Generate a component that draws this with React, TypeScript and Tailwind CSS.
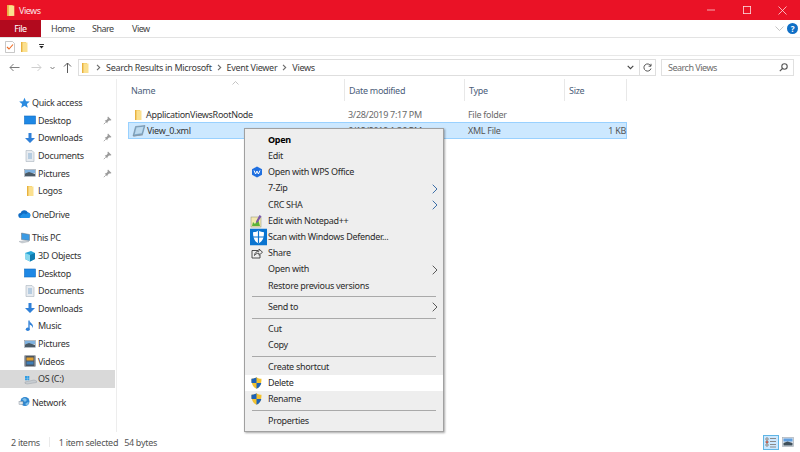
import React from "react";

const Folder = ({ s = 12 }: { s?: number }) => (
  <svg width={s} height={s} viewBox="0 0 12 12" className="shrink-0">
    <path d="M3 1h5v10H3z" fill="#f5c95f" />
    <path d="M4 1.500h5.500V11H4z" fill="#fbe08f" />
    <path d="M3 1h1.400v10H3z" fill="#e8b23f" />
  </svg>
);
const Monitor = () => (
  <svg width="12" height="12" viewBox="0 0 12 12" className="shrink-0">
    <rect x="0.5" y="2" width="11" height="8" fill="#1e88e5" />
    <rect x="0.5" y="2" width="11" height="8" fill="none" stroke="#0f6cc0" strokeWidth=".6" />
  </svg>
);
const Down = () => (
  <svg width="12" height="12" viewBox="0 0 12 12" className="shrink-0">
    <path d="M4.500 1h3v5H11L6 11 1 6h3.500z" fill="#2f80d8" />
  </svg>
);
const Doc = () => (
  <svg width="12" height="12" viewBox="0 0 12 12" className="shrink-0">
    <path d="M2 .5h6l2 2v9H2z" fill="#e7ebf0" stroke="#a9b3bd" strokeWidth=".6" />
    <path d="M4 4h4M4 6h4M4 8h4" stroke="#6f9fc9" strokeWidth=".8" />
  </svg>
);
const Pic = () => (
  <svg width="12" height="12" viewBox="0 0 12 12" className="shrink-0">
    <rect x="0.5" y="2.500" width="11" height="7" fill="#dfe6ec" stroke="#8f9aa5" strokeWidth=".6" />
    <path d="M1 3h10v3H1z" fill="#7fb2e0" />
    <path d="M1 6.500l4-1.500 6 2v2H1z" fill="#4a5a66" />
  </svg>
);
const Pin = () => (
  <svg width="9" height="9" viewBox="0 0 9 9" className="shrink-0">
    <path d="M5 .5l3.500 3.500-1 .5-1.500 0-1.500 1.500-.3 1.500L1.700 4.500l1.500-.3L4.700 2.700l-.2-1.200z" fill="#9a9a9a" />
    <path d="M2.800 6.200L.8 8.200" stroke="#9a9a9a" strokeWidth=".8" />
  </svg>
);
const Star = () => (
  <svg width="12" height="12" viewBox="0 0 12 12" className="shrink-0">
    <path d="M6.500.8l1.500 3.500 3.800.3-2.900 2.500.9 3.700-3.300-2-3.300 2 .9-3.700L1.200 4.600 5 4.300z" fill="#2a8be0" />
  </svg>
);
const Cloud = () => (
  <svg width="13" height="12" viewBox="0 0 13 12" className="shrink-0">
    <path d="M3 10a2.500 2.500 0 0 1-.4-5A3.800 3.800 0 0 1 9.700 4.300 2.900 2.900 0 0 1 10 10z" fill="#0f6cc4" />
    <path d="M3 10a1.800 1.800 0 0 1 .8-3.300A2.500 2.500 0 0 1 8 6.500a1.900 1.900 0 0 1 4.300 1.700A2 2 0 0 1 10 10z" fill="#1e8fe6" />
  </svg>
);
const PC = () => (
  <svg width="13" height="12" viewBox="0 0 13 12" className="shrink-0">
    <path d="M3.500 1l8 1.500v6l-8-1z" fill="#3c9be4" stroke="#69707a" strokeWidth=".5" />
    <path d="M1 9.500l7-1 3 1-7 1.500z" fill="#cfd5da" stroke="#9aa2aa" strokeWidth=".4" />
  </svg>
);
const Cube = () => (
  <svg width="12" height="12" viewBox="0 0 12 12" className="shrink-0">
    <path d="M1 3l6-2 4 2v6l-5 2.500L1 9z" fill="#27a6d8" />
    <path d="M1 3l5 2v6.500L1 9z" fill="#8ad8ee" />
    <path d="M6 5l5-2v6l-5 2.500z" fill="#0f7cb0" />
  </svg>
);
const Music = () => (
  <svg width="12" height="12" viewBox="0 0 12 12" className="shrink-0">
    <path d="M5 .5v8.200" stroke="#2f80d8" strokeWidth="1.300" />
    <ellipse cx="3.800" cy="9.300" rx="2" ry="1.800" fill="#2f80d8" />
    <path d="M5.300 1c1 2 3.700 2.500 3.700 5.500 0 .7-.2 1.200-.4 1.500.2-2-1.800-3-3.300-3.500z" fill="#2f80d8" />
  </svg>
);
const Video = () => (
  <svg width="12" height="12" viewBox="0 0 12 12" className="shrink-0">
    <rect x=".5" y=".5" width="11" height="11" fill="#4c5560" />
    <rect x="2.500" y="2.500" width="7" height="3" fill="#e0a030" />
    <rect x="2.500" y="6.500" width="7" height="3" fill="#3f7fb8" />
    <path d="M1.300 1.500v9M10.700 1.500v9" stroke="#c9ced3" strokeWidth=".9" strokeDasharray="1 1" />
  </svg>
);
const Drive = () => (
  <svg width="13" height="12" viewBox="0 0 13 12" className="shrink-0">
    <path d="M1 9l9-2 2.500 1v1.500L3 11 1 10.300z" fill="#c7ccd1" stroke="#8d959c" strokeWidth=".4" />
    <path d="M1 3h2v2H1zM3.300 3h2v2h-2zM1 5.300h2v2H1zM3.300 5.300h2v2h-2z" fill="#2f9de4" />
  </svg>
);
const Net = () => (
  <svg width="13" height="12" viewBox="0 0 13 12" className="shrink-0">
    <circle cx="7" cy="5.500" r="4.500" fill="#2f86cf" />
    <path d="M4 3l3-1 2 2-2 2zM7 8l3-2 1 1-2 2.500z" fill="#7fc0ea" />
    <rect x="1" y="5.500" width="4" height="3" fill="#dfe4e8" stroke="#7a8794" strokeWidth=".4" />
  </svg>
);
const Shield = () => (
  <svg width="13" height="13" viewBox="0 0 13 13" className="shrink-0">
    <path d="M6.500.8c1.500 1 3.300 1.500 5 1.500 0 4.500-1 8-5 10-4-2-5-5.500-5-10 1.700 0 3.500-.5 5-1.500z" fill="#f2c230" />
    <path d="M6.500.8v5.700h-5c-.1-1.300-.1-2.700 0-4.200 1.700 0 3.500-.5 5-1.500z" fill="#1d62b8" />
    <path d="M6.500 6.500v5.800c2.800-1.400 4.300-3.400 4.800-5.800z" fill="#1d62b8" />
  </svg>
);
const Wps = () => (
  <svg width="12" height="12" viewBox="0 0 12 12" className="shrink-0">
    <path d="M6 .5l5 2.800v5.400L6 11.500 1 8.700V3.300z" fill="#1f6fe0" />
    <path d="M3 4.500l1.600 3.500L6 5l1.400 3L9 4.500" fill="none" stroke="#fff" strokeWidth="1" />
  </svg>
);
const Npp = () => (
  <svg width="14" height="14" viewBox="0 0 14 14" className="shrink-0">
    <rect x="1" y="3" width="10" height="10" fill="#f4e9b0" stroke="#8a8f70" strokeWidth=".5" />
    <path d="M2 12l1-4 2 2 3-5 2 7z" fill="#5cb338" />
    <path d="M9.500 1l2 1.200L8 8l-2 1 .2-2z" fill="#7b5aa8" />
  </svg>
);
const Defender = () => (
  <svg width="17" height="17" viewBox="0 0 17 17" className="shrink-0 ml-[3px]">
    <rect width="17" height="17" fill="#0a74d0" />
    <path d="M8.500 2c1.700 1.200 3.500 1.700 5.500 1.700 0 5-1 9-5.500 11.300C4 12.700 3 8.700 3 3.700 5 3.700 6.800 3.200 8.500 2z" fill="#fff" />
    <path d="M8.500 2v13M3 8.500h11" stroke="#0a74d0" strokeWidth="1.200" />
  </svg>
);
const Share = () => (
  <svg width="12" height="12" viewBox="0 0 12 12" className="shrink-0" fill="none" stroke="#3a3a3a" strokeWidth=".9">
    <path d="M7 3.500H1v7.500h8V8" />
    <path d="M3.500 8.500c.2-2.700 2-4.300 4.500-4.300V2l3.500 3.200L8 8.300V6.200c-2 0-3.400.8-4.500 2.300z" fill="#eeeeee" />
  </svg>
);
const XmlIcon = () => (
  <svg width="14" height="12" viewBox="0 0 14 12" className="shrink-0">
    <path d="M3.500 1.500L13 .5l-2.500 9-9.500 1.500z" fill="#7fa9c9" stroke="#6b7a88" strokeWidth=".5" />
    <path d="M4.500 2.500l7-.8-1.800 6.500-7 1z" fill="#bcd9ee" />
    <path d="M1 11l9.500-1.500.5.700L2 11.500z" fill="#8794a0" />
  </svg>
);
const Chevron = ({ blue }: { blue?: boolean }) => (
  <svg width="6" height="10" viewBox="0 0 6 10" className="shrink-0" fill="none" stroke={blue ? "#3d6fa8" : "#5a5a5a"} strokeWidth="1">
    <path d="M.7.700L5 5 .7 9.300" />
  </svg>
);
const Crumb = () => (
  <svg width="5" height="7" viewBox="0 0 5 7" className="shrink-0 mx-[5px]" fill="none" stroke="#6a6a6a" strokeWidth="1.100">
    <path d="M1 .8L3.700 3.500 1 6.200" />
  </svg>
);

type Nav = { icon: React.ReactNode; label: string; pin?: boolean; top?: boolean; sel?: boolean };

const Group = ({ items }: { items: Nav[] }) => (
  <div className="flex flex-col">
    {items.map((n, i) => (
      <div
        key={i}
        className={`flex items-center h-[17.6px] ${n.top ? "pl-[18px]" : "pl-[24px]"} pr-[3px] ${n.sel ? "bg-[#d9d9d9] mr-px" : ""}`}
      >
        <span className="w-[14px] flex justify-start">{n.icon}</span>
        <span className="flex-1 text-[#333]">{n.label}</span>
        {n.pin && <span className="mr-[1px] flex"><Pin /></span>}
      </div>
    ))}
  </div>
);

type M = { t?: string; icon?: React.ReactNode; bold?: boolean; sub?: boolean; blue?: boolean; hover?: boolean; sep?: boolean };
const menu: M[] = [
  { t: "Open", bold: true },
  { t: "Edit" },
  { t: "Open with WPS Office", icon: <Wps /> },
  { t: "7-Zip", sub: true, blue: true },
  { t: "CRC SHA", sub: true, blue: true },
  { t: "Edit with Notepad++", icon: <Npp /> },
  { t: "Scan with Windows Defender...", icon: <Defender /> },
  { t: "Share", icon: <Share /> },
  { t: "Open with", sub: true },
  { t: "Restore previous versions" },
  { sep: true },
  { t: "Send to", sub: true },
  { sep: true },
  { t: "Cut" },
  { t: "Copy" },
  { sep: true },
  { t: "Create shortcut" },
  { t: "Delete", icon: <Shield />, hover: true },
  { t: "Rename", icon: <Shield /> },
  { sep: true },
  { t: "Properties" },
];

const Cols = "grid grid-cols-[216px_120px_100px_63px]";

export default function App() {
  return (
    <div className="relative w-[800px] h-[452px] overflow-hidden bg-white text-[9px] tracking-[-0.3px] leading-none text-[#333] font-['Noto_Sans','Open_Sans',sans-serif] flex flex-col">
      {/* Title bar */}
      <div className="h-[20px] bg-[#ea1226] flex items-center text-white pl-[4px]">
        <Folder s={13} />
        <span className="ml-[2px] text-[#fbe3e5] tracking-[-0.5px]">Views</span>
        <div className="ml-auto flex items-center">
          <svg width="8" height="2" viewBox="0 0 8 2" className="mr-[28px]"><path d="M0 1h8" stroke="#fff" strokeWidth=".8" opacity=".8" /></svg>
          <svg width="8" height="8" viewBox="0 0 8 8" className="mr-[27px]"><rect x=".4" y=".4" width="7.200" height="7.200" fill="none" stroke="#fff" strokeWidth=".8" opacity=".85" /></svg>
          <svg width="9" height="9" viewBox="0 0 9 9" className="mr-[13px]"><path d="M.5.500l8 8M8.500.500l-8 8" stroke="#fff" strokeWidth=".8" opacity=".85" /></svg>
        </div>
      </div>
      {/* Ribbon tabs */}
      <div className="h-[18px] flex items-stretch border-b border-[#e3e3e3] text-[#444] tracking-[-0.5px]">
        <div className="w-[41px] bg-[#b20a1e] text-white flex items-center justify-center">File</div>
        <div className="ml-[10px] w-[21px] flex items-center">Home</div>
        <div className="ml-[20px] w-[20px] flex items-center">Share</div>
        <div className="ml-[20px] flex items-center">View</div>
        <div className="ml-auto flex items-center pr-[2px]">
          <svg width="9" height="5" viewBox="0 0 9 5" className="mr-[3px]" fill="none" stroke="#b5b5b5" strokeWidth=".8"><path d="M.5.500L4.500 4.500 8.500.500" /></svg>
          <div className="w-[11px] h-[11px] rounded-full bg-[#0f6fc6] text-white font-bold text-[8px] flex items-center justify-center">?</div>
        </div>
      </div>
      {/* QAT */}
      <div className="h-[18px] border-b border-[#e8e8e8] flex items-center pl-[5px]">
        <svg width="10" height="12" viewBox="0 0 10 12">
          <path d="M.5.500h7l2 2v9h-9z" fill="#fff" stroke="#b0b0b0" strokeWidth=".7" />
          <path d="M2 6l2 2 4-4.500" fill="none" stroke="#ee6a22" strokeWidth="1.100" />
        </svg>
        <span className="ml-[3px] flex"><Folder s={12} /></span>
        <svg width="5" height="5" viewBox="0 0 5 5" className="ml-[9px]">
          <path d="M0 .5h5" stroke="#222" strokeWidth=".9" /><path d="M.3 2h4.400L2.500 4.500z" fill="#222" />
        </svg>
      </div>
      {/* Address row */}
      <div className="h-[23px] flex items-center">
        <div className="w-[78px] flex items-center pl-[9px] shrink-0">
          <svg width="11" height="9" viewBox="0 0 11 9" fill="none" stroke="#7a7a7a" strokeWidth="1"><path d="M10.500 4.500H1M4.500 1L1 4.500 4.500 8" /></svg>
          <svg width="11" height="9" viewBox="0 0 11 9" fill="none" stroke="#cfcfcf" strokeWidth="1" className="ml-[11px]"><path d="M.5 4.500H10M6.500 1L10 4.500 6.500 8" /></svg>
          <svg width="5" height="4" viewBox="0 0 5 4" fill="none" stroke="#7a7a7a" strokeWidth="1" className="ml-[8px]"><path d="M.5 1L2.500 3 4.500 1" /></svg>
          <svg width="9" height="11" viewBox="0 0 9 11" fill="none" stroke="#5a5a5a" strokeWidth="1" className="ml-[8px]"><path d="M4.500 11V1M1 4.500L4.500 1 8 4.500" /></svg>
        </div>
        <div className="w-[578px] h-[17px] border border-[#dedede] flex items-center text-[#3c3c3c]">
          <Folder s={12} />
          <Crumb />
          <span>Search Results in Microsoft</span>
          <Crumb />
          <span>Event Viewer</span>
          <Crumb />
          <span>Views</span>
          <svg width="7" height="5" viewBox="0 0 7 5" fill="none" stroke="#444" strokeWidth="1.100" className="ml-auto mr-[5px]"><path d="M.7.800L3.500 3.700 6.300.800" /></svg>
          <div className="w-px h-full bg-[#dedede]" />
          <svg width="9" height="9" viewBox="0 0 9 9" fill="none" stroke="#555" strokeWidth="1" className="mx-[3px]"><path d="M7.800 3A3.600 3.600 0 1 0 8 5.500M8 .8V3.200H5.600" /></svg>
        </div>
        <div className="ml-[5px] w-[133px] h-[17px] border border-[#e0e0e0] flex items-center pl-[6px] text-[#6d6d6d]">
          <span className="tracking-[-0.5px]">Search Views</span>
          <svg width="9" height="9" viewBox="0 0 9 9" fill="none" stroke="#555" strokeWidth="1.100" className="ml-auto mr-[5px]"><circle cx="5.500" cy="3.500" r="2.700" /><path d="M3.500 5.500L.8 8.200" /></svg>
        </div>
      </div>
      {/* Main */}
      <div className="flex-1 flex min-h-0">
        <aside className="w-[117px] shrink-0 border-r border-[#ededed] pt-[15px] flex flex-col gap-[6px]">
          <Group
            items={[
              { icon: <Star />, label: "Quick access", top: true },
              { icon: <Monitor />, label: "Desktop", pin: true },
              { icon: <Down />, label: "Downloads", pin: true },
              { icon: <Doc />, label: "Documents", pin: true },
              { icon: <Pic />, label: "Pictures", pin: true },
              { icon: <Folder />, label: "Logos" },
            ]}
          />
          <Group items={[{ icon: <Cloud />, label: "OneDrive", top: true }]} />
          <Group
            items={[
              { icon: <PC />, label: "This PC", top: true },
              { icon: <Cube />, label: "3D Objects" },
              { icon: <Monitor />, label: "Desktop" },
              { icon: <Doc />, label: "Documents" },
              { icon: <Down />, label: "Downloads" },
              { icon: <Music />, label: "Music" },
              { icon: <Pic />, label: "Pictures" },
              { icon: <Video />, label: "Videos" },
              { icon: <Drive />, label: "OS (C:)", sel: true },
            ]}
          />
          <Group items={[{ icon: <Net />, label: "Network", top: true }]} />
        </aside>
        <section className="flex-1 pl-[11px] min-w-0">
          <div className={`${Cols} h-[22px] items-center text-[#4c607a] w-[499px]`}>
            <div className="pl-[3px] relative h-full flex items-center">
              Name
              <svg width="7" height="4" viewBox="0 0 7 4" fill="none" stroke="#b5b5b5" strokeWidth=".8" className="absolute left-[104px] top-[2px]"><path d="M.5 3.500L3.500 .5l3 3" /></svg>
            </div>
            <div className="h-full flex items-center border-l border-[#e8e8e8] pl-[4px]">Date modified</div>
            <div className="h-full flex items-center border-l border-[#e8e8e8] pl-[4px]">Type</div>
            <div className="h-full flex items-center border-l border-r border-[#e8e8e8] pl-[4px]">Size</div>
          </div>
          <div className="mt-[6px] w-[499px]">
            <div className={`${Cols} h-[15px] items-center text-[#6a6a6a]`}>
              <div className="flex items-center pl-[4px] text-[#333]"><Folder /><span className="ml-[2px]">ApplicationViewsRootNode</span></div>
              <div className="pl-[4px]">3/28/2019 7:17 PM</div>
              <div className="pl-[4px]">File folder</div>
              <div />
            </div>
            <div className={`${Cols} h-[17px] items-center bg-[#cce8ff] border border-[#99d1ff] text-[#555]`}>
              <div className="flex items-center pl-[3px] text-[#333]"><XmlIcon /><span className="ml-[1px]">View_0.xml</span></div>
              <div className="pl-[3px]">6/12/2019 1:36 PM</div>
              <div className="pl-[3px]">XML File</div>
              <div className="text-right pr-[2px]">1 KB</div>
            </div>
          </div>
        </section>
      </div>
      {/* Status bar */}
      <div className="h-[20px] flex items-center pl-[11px] text-[#555]">
        <span>2 items</span>
        <span className="ml-[9px] mr-[9px] w-px h-[10px] bg-[#eaeaea]" />
        <span>1 item selected</span>
        <span className="ml-[6px]">54 bytes</span>
        <div className="ml-auto flex items-center pr-[6px]">
          <div className="w-[16px] h-[15px] bg-[#cce8ff] border border-[#5fb5e5] flex items-center justify-center">
            <svg width="12" height="11" viewBox="0 0 12 11" stroke="#8a8a8a" strokeWidth="1">
              <path d="M5 1.500h6M5 4.500h6M5 7.500h6M5 10h6" />
              <path d="M1 1h2v2H1zM1 4h2v2H1zM1 7h2v2H1z" fill="#fff" />
              <rect x="1.200" y="4.300" width="1.600" height="1.600" fill="#d84030" stroke="none" />
            </svg>
          </div>
          <svg width="12" height="10" viewBox="0 0 12 10" className="ml-[3px]">
            <rect x=".5" y=".5" width="11" height="9" fill="#dfe6ec" stroke="#a8b0b8" strokeWidth=".7" />
            <path d="M1.500 1.500h9v3h-9z" fill="#5f9fe0" /><path d="M1.500 6l4-1.500 5 1.500v2.500h-9z" fill="#3f4f5a" />
          </svg>
        </div>
      </div>
      {/* Context menu */}
      <div className="absolute left-[244px] top-[128px] w-[200px] h-[304px] bg-[#eeeeee] border border-[#a0a0a0] shadow-[1px_1px_2px_rgba(0,0,0,0.35)] pt-[3px] flex flex-col text-[#2b2b2b]">
        {menu.map((m, i) =>
          m.sep ? (
            <div key={i} className="h-[5.500px] mx-[7px] flex items-center shrink-0">
              <div className="w-full h-px bg-[#a9a9a9]" />
            </div>
          ) : (
            <div key={i} className={`h-[16.200px] shrink-0 flex items-center relative pl-[23px] pb-[1.500px] ${m.hover ? "bg-white" : ""} ${m.bold ? "font-bold text-black" : ""}`}>
              {m.icon && (
                <span className="absolute left-[3px] w-[17px] flex justify-center top-1/2 -translate-y-1/2">{m.icon}</span>
              )}
              <span>{m.t}</span>
              {m.sub && <span className="absolute right-[5px] top-1/2 -translate-y-1/2 flex"><Chevron blue={m.blue} /></span>}
            </div>
          )
        )}
      </div>
    </div>
  );
}
